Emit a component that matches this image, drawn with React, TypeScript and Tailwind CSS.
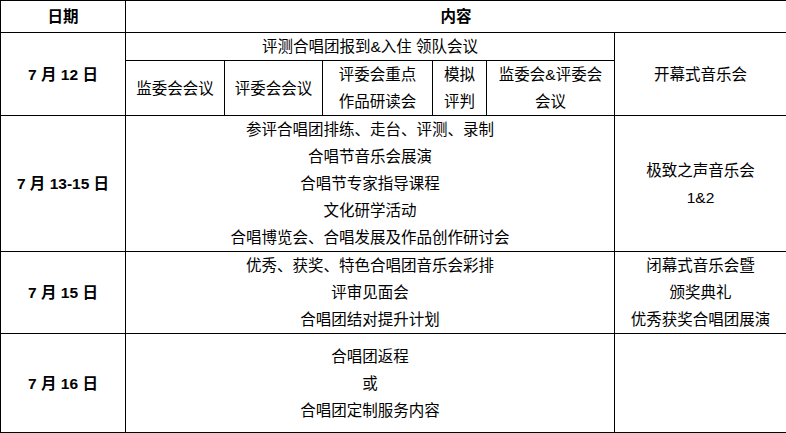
import React from "react";

// Schedule table: dates in the first column, programme in the middle, concerts on the right
const cell = "border border-black text-center align-middle p-0 leading-[27px]";

function Lines({ items }: { items: string[] }) {
  return (
    <>
      {items.map((t, i) => (
        <div key={i}>{t}</div>
      ))}
    </>
  );
}

export default function App() {
  return (
    <div
      className="w-[786px] h-[433px] bg-white text-black text-[15.5px]"
      style={{ fontFamily: '"Liberation Sans", "Noto Sans CJK SC", sans-serif' }}
    >
      <table className="w-[786px] border-collapse table-fixed">
        <colgroup>
          <col className="w-[125px]" />
          <col className="w-[99px]" />
          <col className="w-[98px]" />
          <col className="w-[110px]" />
          <col className="w-[54px]" />
          <col className="w-[128px]" />
          <col className="w-[172px]" />
        </colgroup>
        <tbody>
          <tr className="h-[32px]">
            <td className={`${cell} font-bold`}>日期</td>
            <td className={`${cell} font-bold`} colSpan={6}>
              内容
            </td>
          </tr>
          <tr className="h-[28px]">
            <td className={`${cell} font-bold`} rowSpan={2}>
              7 月 12 日
            </td>
            <td className={cell} colSpan={5}>
              评测合唱团报到&amp;入住 领队会议
            </td>
            <td className={cell} rowSpan={2}>
              开幕式音乐会
            </td>
          </tr>
          <tr className="h-[55px]">
            <td className={cell}>监委会会议</td>
            <td className={cell}>评委会会议</td>
            <td className={cell}>
              <Lines items={["评委会重点", "作品研读会"]} />
            </td>
            <td className={cell}>
              <Lines items={["模拟", "评判"]} />
            </td>
            <td className={cell}>
              <Lines items={["监委会&评委会", "会议"]} />
            </td>
          </tr>
          <tr className="h-[136px]">
            <td className={`${cell} font-bold`}>7 月 13-15 日</td>
            <td className={cell} colSpan={5}>
              <Lines
                items={[
                  "参评合唱团排练、走台、评测、录制",
                  "合唱节音乐会展演",
                  "合唱节专家指导课程",
                  "文化研学活动",
                  "合唱博览会、合唱发展及作品创作研讨会",
                ]}
              />
            </td>
            <td className={cell}>
              <Lines items={["极致之声音乐会", "1&2"]} />
            </td>
          </tr>
          <tr className="h-[82px]">
            <td className={`${cell} font-bold`}>7 月 15 日</td>
            <td className={cell} colSpan={5}>
              <Lines items={["优秀、获奖、特色合唱团音乐会彩排", "评审见面会", "合唱团结对提升计划"]} />
            </td>
            <td className={cell}>
              <Lines items={["闭幕式音乐会暨", "颁奖典礼", "优秀获奖合唱团展演"]} />
            </td>
          </tr>
          <tr className="h-[99px]">
            <td className={`${cell} font-bold`}>7 月 16 日</td>
            <td className={cell} colSpan={5}>
              <Lines items={["合唱团返程", "或", "合唱团定制服务内容"]} />
            </td>
            <td className={cell}></td>
          </tr>
        </tbody>
      </table>
    </div>
  );
}
